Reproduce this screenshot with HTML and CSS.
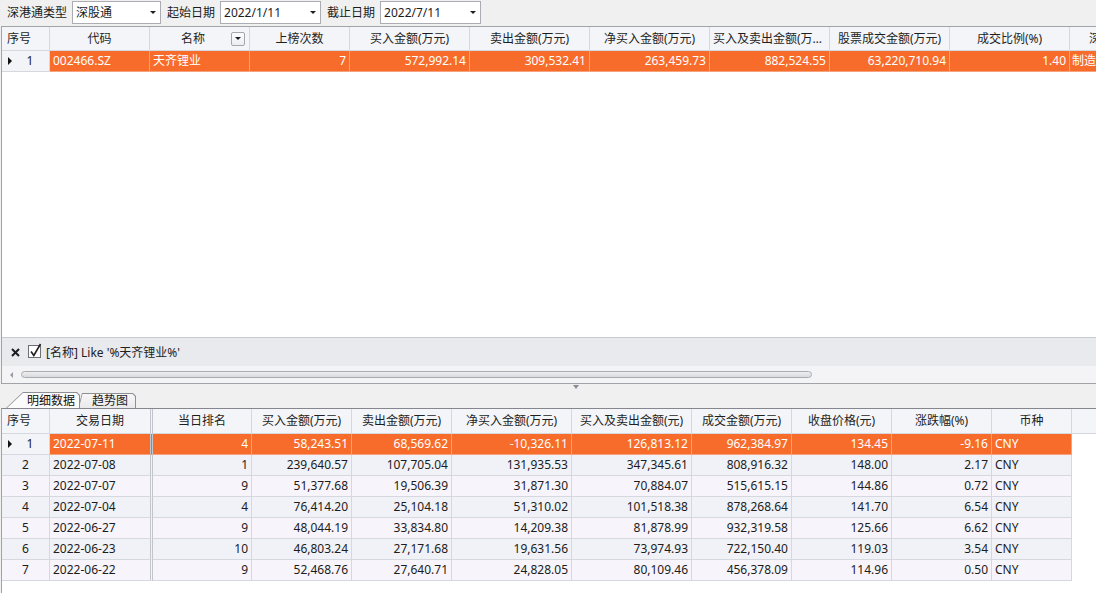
FILE: index.html
```html
<!DOCTYPE html>
<html lang="zh">
<head>
<meta charset="utf-8">
<title>深港通</title>
<link rel="stylesheet" href="styles.css">
</head>
<body>
<div class="toolbar">
  <span class="lbl">深港通类型</span>
  <div class="combo w1"><span class="combo-text">深股通</span><i class="caret"></i></div>
  <span class="lbl">起始日期</span>
  <div class="combo w2"><span class="combo-text">2022/1/11</span><i class="caret"></i></div>
  <span class="lbl">截止日期</span>
  <div class="combo w2"><span class="combo-text">2022/7/11</span><i class="caret"></i></div>
</div>

<div class="grid top-grid">
  <div class="row head">
    <div class="cell t1 left">序号</div>
    <div class="cell t2">代码</div>
    <div class="cell t3 with-btn"><span class="htext">名称</span><span class="fbtn"><i class="caret small"></i></span></div>
    <div class="cell t4">上榜次数</div>
    <div class="cell t5">买入金额(万元)</div>
    <div class="cell t5">卖出金额(万元)</div>
    <div class="cell t5">净买入金额(万元)</div>
    <div class="cell t5">买入及卖出金额(万元)</div>
    <div class="cell t5">股票成交金额(万元)</div>
    <div class="cell t5">成交比例(%)</div>
    <div class="cell t11 left cut">深港通行业</div>
  </div>
  <div class="row data sel">
    <div class="cell t1 ind"><i class="tri"></i><span class="idx">1</span></div>
    <div class="cell t2">002466.SZ</div>
    <div class="cell t3">天齐锂业</div>
    <div class="cell t4 num">7</div>
    <div class="cell t5 num">572,992.14</div>
    <div class="cell t5 num">309,532.41</div>
    <div class="cell t5 num">263,459.73</div>
    <div class="cell t5 num">882,524.55</div>
    <div class="cell t5 num">63,220,710.94</div>
    <div class="cell t5 num">1.40</div>
    <div class="cell t11 tight">制造业</div>
  </div>
  <div class="grid-empty"></div>
  <div class="filter">
    <svg class="x-ico" width="9" height="9" viewBox="0 0 9 9"><path d="M1 1L8 8M8 1L1 8" stroke="#1d1d1d" stroke-width="2" fill="none"/></svg>
    <svg class="chk" width="14" height="15" viewBox="0 0 14 15"><rect x="0.5" y="2.5" width="12" height="12" fill="#fff" stroke="#6e6e74"/><path d="M3 8.5L5.8 12.5L12.5 1" stroke="#202020" stroke-width="1.6" fill="none"/></svg>
    <span class="ftext">[名称] Like '%天齐锂业%'</span>
  </div>
  <div class="hscroll">
    <i class="sarrow"></i>
    <div class="thumb"></div>
  </div>
</div>

<div class="splitter"><i class="split-arrow"></i></div>

<div class="tabs">
  <div class="tab active"><div class="tab-in">明细数据</div></div>
  <div class="tab inactive"><div class="tab-in">趋势图</div></div>
</div>

<div class="grid bottom-grid">
  <div class="row head">
    <div class="cell b1 left">序号</div>
    <div class="cell b2">交易日期</div>
    <div class="cell b3">当日排名</div>
    <div class="cell b4">买入金额(万元)</div>
    <div class="cell b4">卖出金额(万元)</div>
    <div class="cell b6">净买入金额(万元)</div>
    <div class="cell b6">买入及卖出金额(元)</div>
    <div class="cell b4">成交金额(万元)</div>
    <div class="cell b4">收盘价格(元)</div>
    <div class="cell b4">涨跌幅(%)</div>
    <div class="cell b11">币种</div>
    <div class="cell filler"></div>
  </div>
  <div class="row data sel">
    <div class="cell b1 ind"><i class="tri"></i><span class="idx">1</span></div>
    <div class="cell b2">2022-07-11</div>
    <div class="cell b3 num">4</div>
    <div class="cell b4 num">58,243.51</div>
    <div class="cell b4 num">68,569.62</div>
    <div class="cell b6 num">-10,326.11</div>
    <div class="cell b6 num">126,813.12</div>
    <div class="cell b4 num">962,384.97</div>
    <div class="cell b4 num">134.45</div>
    <div class="cell b4 num">-9.16</div>
    <div class="cell b11">CNY</div>
  </div>
  <div class="row data even">
    <div class="cell b1 center">2</div>
    <div class="cell b2">2022-07-08</div>
    <div class="cell b3 num">1</div>
    <div class="cell b4 num">239,640.57</div>
    <div class="cell b4 num">107,705.04</div>
    <div class="cell b6 num">131,935.53</div>
    <div class="cell b6 num">347,345.61</div>
    <div class="cell b4 num">808,916.32</div>
    <div class="cell b4 num">148.00</div>
    <div class="cell b4 num">2.17</div>
    <div class="cell b11">CNY</div>
  </div>
  <div class="row data odd">
    <div class="cell b1 center">3</div>
    <div class="cell b2">2022-07-07</div>
    <div class="cell b3 num">9</div>
    <div class="cell b4 num">51,377.68</div>
    <div class="cell b4 num">19,506.39</div>
    <div class="cell b6 num">31,871.30</div>
    <div class="cell b6 num">70,884.07</div>
    <div class="cell b4 num">515,615.15</div>
    <div class="cell b4 num">144.86</div>
    <div class="cell b4 num">0.72</div>
    <div class="cell b11">CNY</div>
  </div>
  <div class="row data even">
    <div class="cell b1 center">4</div>
    <div class="cell b2">2022-07-04</div>
    <div class="cell b3 num">4</div>
    <div class="cell b4 num">76,414.20</div>
    <div class="cell b4 num">25,104.18</div>
    <div class="cell b6 num">51,310.02</div>
    <div class="cell b6 num">101,518.38</div>
    <div class="cell b4 num">878,268.64</div>
    <div class="cell b4 num">141.70</div>
    <div class="cell b4 num">6.54</div>
    <div class="cell b11">CNY</div>
  </div>
  <div class="row data odd">
    <div class="cell b1 center">5</div>
    <div class="cell b2">2022-06-27</div>
    <div class="cell b3 num">9</div>
    <div class="cell b4 num">48,044.19</div>
    <div class="cell b4 num">33,834.80</div>
    <div class="cell b6 num">14,209.38</div>
    <div class="cell b6 num">81,878.99</div>
    <div class="cell b4 num">932,319.58</div>
    <div class="cell b4 num">125.66</div>
    <div class="cell b4 num">6.62</div>
    <div class="cell b11">CNY</div>
  </div>
  <div class="row data even">
    <div class="cell b1 center">6</div>
    <div class="cell b2">2022-06-23</div>
    <div class="cell b3 num">10</div>
    <div class="cell b4 num">46,803.24</div>
    <div class="cell b4 num">27,171.68</div>
    <div class="cell b6 num">19,631.56</div>
    <div class="cell b6 num">73,974.93</div>
    <div class="cell b4 num">722,150.40</div>
    <div class="cell b4 num">119.03</div>
    <div class="cell b4 num">3.54</div>
    <div class="cell b11">CNY</div>
  </div>
  <div class="row data odd">
    <div class="cell b1 center">7</div>
    <div class="cell b2">2022-06-22</div>
    <div class="cell b3 num">9</div>
    <div class="cell b4 num">52,468.76</div>
    <div class="cell b4 num">27,640.71</div>
    <div class="cell b6 num">24,828.05</div>
    <div class="cell b6 num">80,109.46</div>
    <div class="cell b4 num">456,378.09</div>
    <div class="cell b4 num">114.96</div>
    <div class="cell b4 num">0.50</div>
    <div class="cell b11">CNY</div>
  </div>
</div>
</body>
</html>
```

FILE: styles.css
```css
* { box-sizing: border-box; }
html, body { margin: 0; padding: 0; }
body {
  width: 1096px;
  height: 593px;
  overflow: hidden;
  background: #f0f0f0;
  font-family: "Noto Sans", "Noto Sans CJK SC", sans-serif;
  font-size: 12px;
  color: #1c1c1c;
  display: flex;
  flex-direction: column;
}

/* toolbar */
.toolbar {
  height: 26px;
  flex: none;
  display: flex;
  align-items: flex-start;
  padding-left: 7px;
}
.lbl { line-height: 25px; margin-right: 5px; white-space: nowrap; }
.combo {
  margin-top: 1px;
  height: 23px;
  background: #fff;
  border: 1px solid #abadb3;
  display: flex;
  align-items: center;
  padding-left: 3px;
  margin-right: 6px;
}
.combo.w1 { width: 89px; }
.combo.w2 { width: 101px; }
.combo-text { flex: 1; line-height: 21px; }
.caret {
  width: 0; height: 0;
  border-left: 3px solid transparent;
  border-right: 3px solid transparent;
  border-top: 3px solid #1e1e1e;
  margin-right: 4px;
}
.caret.small { margin: 0; }

/* grids */
.grid {
  margin-left: 1px;
  border-left: 1px solid #a2a3a9;
  background: #fff;
  overflow: hidden;
}
.top-grid {
  height: 358px;
  flex: none;
  border-top: 1px solid #a2a3a9;
  border-bottom: 1px solid #a2a3a9;
  display: flex;
  flex-direction: column;
}
.row { display: flex; flex: none; }
.cell {
  flex: none;
  border-right: 1px solid #d6d8df;
  border-bottom: 1px solid #d6d8df;
  padding: 0 3px;
  white-space: nowrap;
  overflow: hidden;
  text-overflow: ellipsis;
}
.head .cell {
  height: 24px;
  line-height: 23px;
  background: #f4f5f8;
  text-align: center;
  color: #1e1e1e;
}
.head .cell.left { text-align: left; padding-left: 5px; }
.head .cell.cut { text-overflow: clip; padding-left: 19px; }
.data .cell { height: 21px; line-height: 20px; }
.num { text-align: right; }
.center { text-align: center; }
.tight { padding-left: 2px; text-overflow: clip; }

.with-btn { display: flex; align-items: center; }
.htext { flex: 1; text-align: center; padding-left: 2px; }
.fbtn {
  width: 14px; height: 14px;
  margin-right: 1px;
  border: 1px solid #a5a7ae;
  border-radius: 2px;
  background: linear-gradient(#fdfdfe, #eceef2);
  display: flex;
  align-items: center;
  justify-content: center;
}

.t1 { width: 48px; }
.t2, .t3, .t4 { width: 100px; }
.t5 { width: 120px; }
.t11 { width: 140px; }

.sel .cell { background: #f86c2b; color: #fff; border-right-color: #f6a27c; border-bottom-color: #f6a27c; }
.sel .cell.ind { background: #f3f4f8; color: #1c1c1c; border-right-color: #d6d8df; border-bottom-color: #d6d8df; }
.ind { display: flex; align-items: center; padding-left: 6px; }
.tri {
  width: 0; height: 0;
  border-left: 4px solid #111;
  border-top: 4px solid transparent;
  border-bottom: 4px solid transparent;
}
.idx { flex: 1; text-align: center; padding-left: 2px; }

.grid-empty { flex: 1; }

.filter {
  height: 29px;
  flex: none;
  background: #e9eaee;
  border-top: 1px solid #c9cacf;
  display: flex;
  align-items: center;
  padding-left: 9px;
}
.x-ico { margin-right: 8px; }
.chk { margin-right: 4px; margin-top: -3px; }
.ftext { color: #222; }

.hscroll {
  height: 17px;
  flex: none;
  background: #f4f4f6;
  display: flex;
  align-items: center;
  padding-left: 8px;
}
.sarrow {
  width: 0; height: 0;
  border-right: 3px solid #9a9ba2;
  border-top: 3px solid transparent;
  border-bottom: 3px solid transparent;
}
.thumb {
  margin-left: 8px;
  width: 791px;
  height: 7px;
  border: 1px solid #a9abb3;
  border-radius: 4px;
  background: linear-gradient(#eeeef1, #d9dadf);
}

/* splitter */
.splitter {
  height: 8px;
  flex: none;
  padding-left: 573px;
  padding-top: 1px;
}
.split-arrow {
  display: block;
  width: 0; height: 0;
  border-top: 4px solid #8a8b94;
  border-left: 3.5px solid transparent;
  border-right: 3.5px solid transparent;
}

/* tabs */
.tabs {
  height: 16px;
  flex: none;
  display: flex;
  align-items: flex-end;
  padding-left: 6px;
}
.tab { padding: 1px 1px 0 1px; background: #8d8f96; }
.tab.active {
  width: 74px;
  height: 16px;
  clip-path: polygon(0 100%, 17px 0, calc(100% - 3px) 0, 100% 3px, 100% 100%);
  position: relative;
  z-index: 1;
}
.tab.active .tab-in {
  height: 15px;
  background: #fbfbfb;
  padding-left: 20px;
  line-height: 15px;
  color: #111;
  clip-path: polygon(0 100%, 16px 0, calc(100% - 2.5px) 0, 100% 2.5px, 100% 100%);
}
.tab.inactive {
  width: 58px;
  height: 15px;
  margin-left: -2px;
  clip-path: polygon(0 100%, 4px 0, calc(100% - 3px) 0, 100% 3px, 100% 100%);
}
.tab.inactive .tab-in {
  height: 14px;
  background: linear-gradient(#f7f7f8, #e9e9ec);
  padding-left: 13px;
  line-height: 14px;
  color: #1a1a1a;
  clip-path: polygon(0 100%, 3.5px 0, calc(100% - 2.5px) 0, 100% 2.5px, 100% 100%);
}

/* bottom grid */
.bottom-grid {
  flex: 1;
  border-top: 1px solid #85868e;
}
.bottom-grid .head .cell { height: 25px; line-height: 24px; }
.bottom-grid .head .filler { flex: 1; border-right: none; }
.b1 { width: 48px; }
.b2 { width: 103px; border-right: 3px double #c3c5cc !important; }
.b3 { width: 99px; }
.b4 { width: 100px; }
.b6 { width: 120px; }
.b11 { width: 80px; }
.even .cell { background: #f0f2f7; }
.odd .cell { background: #f7f5fb; }
```
